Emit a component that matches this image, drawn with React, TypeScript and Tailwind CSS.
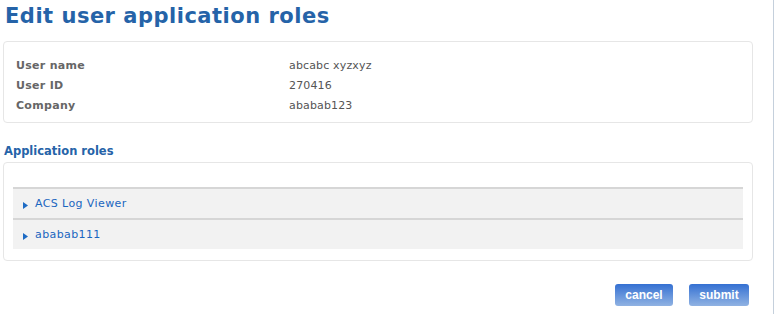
import React from "react";

const font = { fontFamily: '"DejaVu Sans", Verdana, sans-serif' };

function Row({ label, value }: { label: string; value: string }) {
  return (
    <div className="flex h-5 items-center">
      <div className="w-[273px] text-[11px] font-bold tracking-[0.3px] text-[#666666]">{label}</div>
      <div className="text-[11px] tracking-[0.15px] text-[#555555]">{value}</div>
    </div>
  );
}

function RoleRow({ name }: { name: string }) {
  return (
    <div className="flex h-[31px] items-center border-t-2 border-[#d6d6d6] bg-[#f2f2f2] pl-[10px] pt-[2px]">
      <svg width="5" height="7" viewBox="0 0 5 7" className="mr-[7px] mt-[2px]">
        <path d="M0 0 L5 3.5 L0 7 Z" fill="#1e6bc4" />
      </svg>
      <span className="text-[11px] tracking-[0.4px] text-[#1a66c0]">{name}</span>
    </div>
  );
}

export default function App() {
  return (
    <div className="relative h-[314px] w-[776px] overflow-hidden bg-white" style={font}>
      <div className="absolute right-[2px] top-0 h-full w-px bg-[#c5d0dc]" />
      <div className="w-[753px] pl-[3px]">
        <h1 className="pl-[2px] pt-[4px] text-[21px] font-bold leading-[24px] tracking-[0.5px] text-[#2563a8]">
          Edit user application roles
        </h1>
        <div className="mt-[13px] h-[82px] rounded-[4px] border border-[#e6e6e6] pl-[12px] pt-[14px]">
          <Row label="User name" value="abcabc xyzxyz" />
          <Row label="User ID" value="270416" />
          <Row label="Company" value="ababab123" />
        </div>
        <h2 className="mt-[20px] pl-[1px] text-[11.5px] font-bold leading-[16px] text-[#2563a8]">
          Application roles
        </h2>
        <div className="mt-[3px] h-[99px] rounded-[4px] border border-[#e6e6e6] px-[9px] pt-[24px]">
          <RoleRow name="ACS Log Viewer" />
          <RoleRow name="ababab111" />
        </div>
        <div className="mt-[23px] flex justify-end gap-[16px] pr-[4px]">
          <button
            className="ml-[1px] h-[22px] w-[58px] rounded-[3px] bg-gradient-to-b from-[#3470d2] to-[#90b2e2] font-bold text-white"
            style={{ fontFamily: '"Liberation Sans", Arial, sans-serif', fontSize: "12px" }}
          >
            cancel
          </button>
          <button
            className="h-[22px] w-[60px] rounded-[3px] bg-gradient-to-b from-[#3470d2] to-[#90b2e2] font-bold text-white"
            style={{ fontFamily: '"Liberation Sans", Arial, sans-serif', fontSize: "12px" }}
          >
            submit
          </button>
        </div>
      </div>
    </div>
  );
}
